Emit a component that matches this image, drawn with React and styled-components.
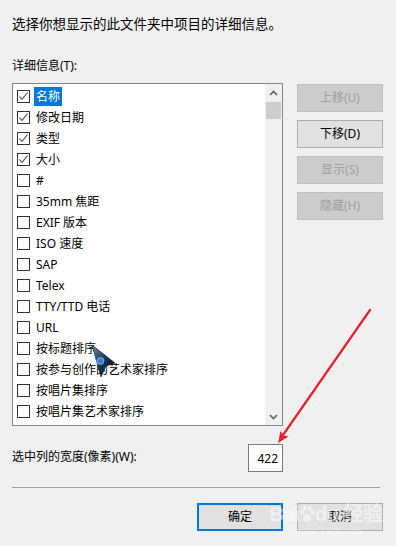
import React from "react";
import styled, { createGlobalStyle } from "styled-components";

const Global = createGlobalStyle`
  html, body { margin: 0; padding: 0; background: #f0f0f0; }
  body { font-family: "Noto Sans", "Noto Sans CJK SC", sans-serif; font-size: 12px; color: #000; }
`;

const Dialog = styled.div`
  position: relative;
  width: 396px;
  height: 546px;
  box-sizing: border-box;
  padding: 14px 13px 0 12px;
  background: #f0f0f0;
  display: flex;
  flex-direction: column;
  overflow: hidden;
`;

const TextLine = styled.div`
  height: 20px;
  line-height: 20px;
  font-size: ${(p) => p.$size || 12}px;
  margin-top: ${(p) => p.$mt || 0}px;
  white-space: nowrap;
`;

const MainRow = styled.div`
  display: flex;
  gap: 14px;
  margin-top: 7px;
`;

const ListBox = styled.div`
  width: 271px;
  height: 343px;
  box-sizing: border-box;
  border: 1px solid #828790;
  background: #fff;
  display: flex;
`;

const Rows = styled.div`
  flex: 1;
  padding-top: 2px;
  display: flex;
  flex-direction: column;
`;

const Row = styled.div`
  height: 21px;
  display: flex;
  align-items: center;
  padding-left: 4px;
  gap: 4px;
  white-space: nowrap;
`;

const Box = styled.span`
  width: 13px;
  height: 13px;
  box-sizing: border-box;
  border: 1px solid #333;
  background: #fff;
  flex: none;
  display: flex;
  align-items: center;
  justify-content: center;
`;

const Label = styled.span`
  height: 19px;
  line-height: 19px;
  padding: 0 2px;
  background: ${(p) => (p.$sel ? "#0078d7" : "transparent")};
  color: ${(p) => (p.$sel ? "#fff" : "#000")};
`;

const Scroll = styled.div`
  width: 17px;
  background: #f0f0f0;
  display: flex;
  flex-direction: column;
`;

const ArrowBtn = styled.div`
  height: 17px;
  display: flex;
  align-items: center;
  justify-content: center;
`;

const Thumb = styled.div`
  height: 17px;
  margin: 1px 1px 0 1px;
  background: #cdcdcd;
`;

const Track = styled.div`
  flex: 1;
`;

const ButtonCol = styled.div`
  display: flex;
  flex-direction: column;
  gap: 8px;
  margin-top: 1px;
`;

const Button = styled.div`
  width: 86px;
  height: 28px;
  box-sizing: border-box;
  display: flex;
  align-items: center;
  justify-content: center;
  border: ${(p) => (p.$default ? "2px solid #0078d7" : p.$disabled ? "1px solid #bfbfbf" : "1px solid #adadad")};
  background: ${(p) => (p.$disabled ? "#cccccc" : "#e1e1e1")};
  color: ${(p) => (p.$disabled ? "#a0a0a0" : "#000")};
  line-height: 20px;
`;

const WidthRow = styled.div`
  width: 271px;
  margin-top: 18px;
  display: flex;
  align-items: center;
  justify-content: space-between;
`;

const WidthLabel = styled.span`
  line-height: 20px;
  margin-top: -2px;
`;

const Input = styled.div`
  width: 35px;
  height: 28px;
  box-sizing: border-box;
  border: 1px solid #7a7a7a;
  background: #fff;
  display: flex;
  align-items: center;
  justify-content: flex-end;
  padding-right: 4px;
`;

const Separator = styled.div`
  width: 368px;
  height: 1px;
  background: #a0a0a0;
  margin-top: 15px;
`;

const Footer = styled.div`
  display: flex;
  justify-content: flex-end;
  gap: 14px;
  margin-top: 15px;
`;

const Overlay = styled.svg`
  position: absolute;
  left: 0;
  top: 0;
  width: 396px;
  height: 546px;
  pointer-events: none;
`;

const Watermark = styled.div`
  position: absolute;
  left: 280px;
  top: 502px;
  width: 92px;
  color: rgba(255, 255, 255, 0.55);
  pointer-events: none;
  display: flex;
  flex-direction: column;
  align-items: center;
  white-space: nowrap;
`;

const WmTop = styled.div`
  display: flex;
  align-items: center;
  font-family: "Liberation Sans", "Noto Sans CJK SC", sans-serif;
  font-size: 20px;
  font-weight: bold;
  line-height: 24px;
  letter-spacing: -0.5px;
`;

const WmBottom = styled.div`
  font-family: "Liberation Sans", sans-serif;
  font-size: 9px;
  line-height: 10px;
`;

const Check = () => (
  <svg width="11" height="11" viewBox="0 0 11 11">
    <path d="M1.5 5.5 L4 8.5 L9.5 1.5" fill="none" stroke="#444" strokeWidth="1.1" />
  </svg>
);

const Chevron = ({ down }) => (
  <svg width="9" height="6" viewBox="0 0 9 6">
    <path d={down ? "M1 1 L4.5 4.5 L8 1" : "M1 5 L4.5 1.5 L8 5"} fill="none" stroke="#606060" strokeWidth="1.6" />
  </svg>
);

const Paw = () => (
  <svg width="16" height="18" viewBox="0 0 16 18">
    <g fill="rgba(255,255,255,0.55)">
      <ellipse cx="3" cy="7" rx="2" ry="2.5" />
      <ellipse cx="6" cy="3" rx="2" ry="2.5" />
      <ellipse cx="10.5" cy="3" rx="2" ry="2.5" />
      <ellipse cx="13.5" cy="7" rx="2" ry="2.5" />
      <path d="M8 9 C4 9 3 14 5 16 C6.5 17 9.5 17 11 16 C13 14 12 9 8 9 Z" />
    </g>
  </svg>
);

const items = [
  ["名称", true, true],
  ["修改日期", true],
  ["类型", true],
  ["大小", true],
  ["#"],
  ["35mm 焦距"],
  ["EXIF 版本"],
  ["ISO 速度"],
  ["SAP"],
  ["Telex"],
  ["TTY/TTD 电话"],
  ["URL"],
  ["按标题排序"],
  ["按参与创作的艺术家排序"],
  ["按唱片集排序"],
  ["按唱片集艺术家排序"],
];

export default function App() {
  return (
    <Dialog>
      <Global />
      <TextLine $size={13.5}>选择你想显示的此文件夹中项目的详细信息。</TextLine>
      <TextLine $mt={22}>详细信息(T):</TextLine>
      <MainRow>
        <ListBox>
          <Rows>
            {items.map(([t, c, s]) => (
              <Row key={t}>
                <Box>{c && <Check />}</Box>
                <Label $sel={s}>{t}</Label>
              </Row>
            ))}
          </Rows>
          <Scroll>
            <ArrowBtn><Chevron /></ArrowBtn>
            <Thumb />
            <Track />
            <ArrowBtn><Chevron down /></ArrowBtn>
          </Scroll>
        </ListBox>
        <ButtonCol>
          <Button $disabled>上移(U)</Button>
          <Button>下移(D)</Button>
          <Button $disabled>显示(S)</Button>
          <Button $disabled>隐藏(H)</Button>
        </ButtonCol>
      </MainRow>
      <WidthRow>
        <WidthLabel>选中列的宽度(像素)(W):</WidthLabel>
        <Input>422</Input>
      </WidthRow>
      <Separator />
      <Footer>
        <Button $default>确定</Button>
        <Button>取消</Button>
      </Footer>
      <Watermark>
        <WmTop>Bai<Paw />du 经验</WmTop>
        <WmBottom>jingyan.baidu.com</WmBottom>
      </Watermark>
      <Overlay viewBox="0 0 396 546">
        <line x1="370" y1="310" x2="283" y2="435" stroke="#e8202a" strokeWidth="2.2" strokeLinecap="round" />
        <path d="M278 443 L280.5 431 L283.5 435.5 L288.5 436.5 Z" fill="#e8202a" />
        <defs>
          <linearGradient id="cg" x1="0" y1="0" x2="1" y2="1">
            <stop offset="0" stopColor="#6a8aa8" />
            <stop offset="0.5" stopColor="#18324e" />
            <stop offset="1" stopColor="#0a1420" />
          </linearGradient>
        </defs>
        <path d="M92 345 L115 363 L106 366 L101 377 Z" fill="url(#cg)" stroke="#0b1a2a" strokeWidth="0.6" />
        <circle cx="100.5" cy="361" r="3.4" fill="#2f7fe0" stroke="#9cc4f0" strokeWidth="0.8" />
      </Overlay>
    </Dialog>
  );
}
